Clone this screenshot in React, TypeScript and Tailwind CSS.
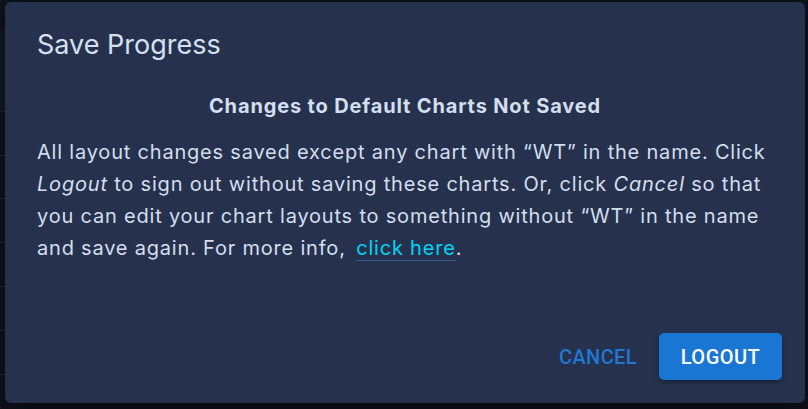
import React from "react";

const Backdrop = () => (
  <div className="absolute inset-0 bg-[#0e121a]">
    <div className="absolute left-0 top-[30px] w-[8px] h-[80px] bg-[#0f1a26]" />
    {[111, 155, 198, 242, 286, 330, 374].map((y) => (
      <div key={y} className="absolute left-0 w-[8px] h-px bg-[#222a36]" style={{ top: y }} />
    ))}
  </div>
);

export default function App() {
  return (
    <div className="relative w-[808px] h-[409px] overflow-hidden font-['Inter',sans-serif]">
      <Backdrop />
      <div className="relative ml-[5px] mt-[2px] w-[800px] h-[401px] rounded-[6px] bg-[#26324d] shadow-[0_8px_24px_rgba(0,0,0,0.5)] flex flex-col">
        <div className="px-[32px] pt-[27px] text-[27px] leading-[32px] text-[#d5e0f2]">Save Progress</div>
        <div className="px-[32px] pt-[29px] text-[#d3deef]">
          <div className="text-center font-bold text-[20px] leading-[32px] tracking-[0.85px]">
            Changes to Default Charts Not Saved
          </div>
          <p className="mt-[14px] text-[20px] leading-[32px] tracking-[0.8px]">
            All layout changes saved except any chart with “WT” in the name. Click <i>Logout</i> to sign
            out without saving these charts. Or, click <i>Cancel</i> so that you can edit your chart
            layouts to something without “WT” in the name and save again. For more info,{" "}
            <a className="ml-[4px] text-[#00d4f5] border-b border-[#2f5f8a]">click here</a>.
          </p>
        </div>
        <div className="mt-auto flex justify-end items-center gap-[10px] pr-[23px] pb-[23px] font-['Roboto',sans-serif]">
          <button className="h-[47px] px-[12px] text-[20px] font-medium tracking-[0.4px] text-[#1f78d4]">
            CANCEL
          </button>
          <button className="h-[47px] w-[123px] rounded-[5px] bg-[#1976d2] text-[20px] font-medium tracking-[0.5px] text-white shadow-[0_3px_5px_rgba(0,0,0,0.3)]">
            LOGOUT
          </button>
        </div>
      </div>
    </div>
  );
}
